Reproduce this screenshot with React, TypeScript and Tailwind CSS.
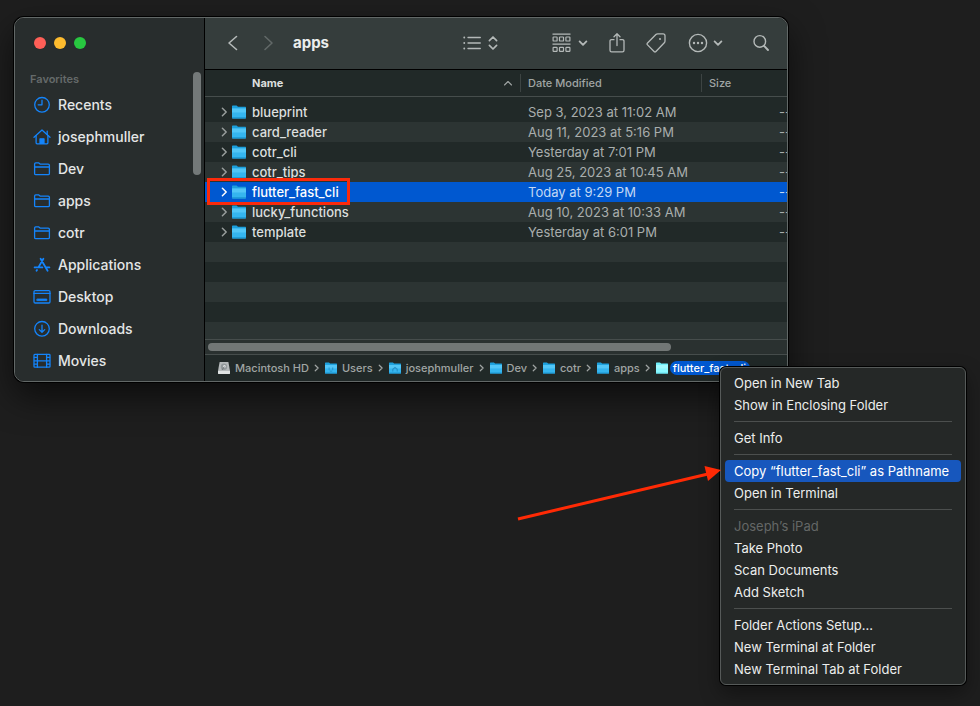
import type { ReactNode } from "react";

type FolderTone = "normal" | "bright";

function Folder({ small, tone = "normal", mark }: { small?: boolean; tone?: FolderTone; mark?: "users" | "home" }) {
  const bright = tone === "bright";
  return (
    <svg
      className={small ? "h-[12px] w-[12px] shrink-0" : "h-[14px] w-[14px] shrink-0"}
      viewBox="0 0 14 14"
      preserveAspectRatio="none"
      aria-hidden="true"
    >
      <path d="M0 1.3Q0 .6.7.6H4.6L6 1.8H13.4Q14 1.8 14 2.4V6H0Z" fill={bright ? "#6ff0fb" : "#1c9fdc"} />
      <path d="M0 3.4H14V12.7Q14 13.4 13.3 13.4H.7Q0 13.4 0 12.7Z" fill={bright ? "#8bf8ff" : "#35b5ef"} />
      <path d="M0 3.4H14V7.5H0Z" fill={bright ? "#a2fbff" : "#52c6f7"} />
      <path d="M0 12.2H14V12.7Q14 13.4 13.3 13.4H.7Q0 13.4 0 12.7Z" fill={bright ? "#62dff0" : "#1a95d2"} />
      {mark === "users" && (
        <path d="M4.8 6.4V9.2M9 6.4V9.2M5.4 10.4Q7 11.4 8.6 10.4" stroke="#2590c8" strokeWidth="1.1" fill="none" />
      )}
      {mark === "home" && <path d="M4.4 11V8.4L7 6.4L9.6 8.4V11" stroke="#2590c8" strokeWidth="1.3" fill="none" />}
    </svg>
  );
}

function Disk() {
  return (
    <svg className="h-[12px] w-[12px] shrink-0" viewBox="0 0 12 12" aria-hidden="true">
      <path d="M1.6 0H10.4L12 9V11.2Q12 12 11.2 12H.8Q0 12 0 11.2V9Z" fill="#b5babb" />
      <path d="M0 9H12V11.2Q12 12 11.2 12H.8Q0 12 0 11.2Z" fill="#dfe3e3" />
      <circle cx="6" cy="4.8" r="3.2" fill="#92999b" />
      <circle cx="6.4" cy="4.4" r="1.3" fill="#dde1e2" />
      <path d="M4 8L6.4 4.6" stroke="#666d6f" strokeWidth=".8" />
    </svg>
  );
}

function Chevron({ className, d, box = "0 0 10 10", width = 1.5 }: { className: string; d: string; box?: string; width?: number }) {
  return (
    <svg className={className} viewBox={box} fill="none" stroke="currentColor" strokeWidth={width} strokeLinecap="round" strokeLinejoin="round" aria-hidden="true">
      <path d={d} />
    </svg>
  );
}

function SideGlyph({ children }: { children: ReactNode }) {
  return (
    <svg className="h-[18px] w-[18px] shrink-0 text-[#1484fa]" viewBox="0 0 18 18" fill="none" stroke="currentColor" strokeWidth="1.3" strokeLinecap="round" strokeLinejoin="round" aria-hidden="true">
      {children}
    </svg>
  );
}

const folderGlyph = (
  <SideGlyph>
    <path d="M1.6 13.4V4Q1.6 2.9 2.7 2.9H5.8L7.4 4.2H15.2Q16.4 4.2 16.4 5.3V13.4Q16.4 14.6 15.2 14.6H2.8Q1.6 14.6 1.6 13.4Z" />
    <path d="M1.6 7H16.4" />
  </SideGlyph>
);

const favorites: { name: string; glyph: ReactNode }[] = [
  {
    name: "Recents",
    glyph: (
      <SideGlyph>
        <circle cx="9" cy="8.8" r="7.3" />
        <path d="M9 4.2V8.8H5.2" />
      </SideGlyph>
    ),
  },
  {
    name: "josephmuller",
    glyph: (
      <SideGlyph>
        <path d="M1 9.2L9 2L17 9.2" />
        <path d="M3.1 7.6V14.8Q3.1 15.8 4.1 15.8H13.9Q14.9 15.8 14.9 14.8V7.6M14.2 6.4V3.2" />
        <path d="M7 15.4V10.8H11V15.4Z" fill="currentColor" />
      </SideGlyph>
    ),
  },
  { name: "Dev", glyph: folderGlyph },
  { name: "apps", glyph: folderGlyph },
  { name: "cotr", glyph: folderGlyph },
  {
    name: "Applications",
    glyph: (
      <SideGlyph>
        <g strokeWidth="1.8">
          <path d="M7.6 2.8L14.6 14.8M10.4 2.8L5.4 11.4M1.6 11.4H9.4M12.6 11.4H16.4M4 14L3.5 14.8" />
        </g>
      </SideGlyph>
    ),
  },
  {
    name: "Desktop",
    glyph: (
      <SideGlyph>
        <rect x="1" y="2.6" width="16" height="12.4" rx="1.2" />
        <path d="M1 5.4H17" />
        <rect x="4.2" y="11" width="9.6" height="1.6" fill="currentColor" strokeWidth=".8" />
      </SideGlyph>
    ),
  },
  {
    name: "Downloads",
    glyph: (
      <SideGlyph>
        <circle cx="9" cy="8.8" r="7.3" />
        <path d="M9 5.2V12M6.3 9.6L9 12.2L11.7 9.6" />
      </SideGlyph>
    ),
  },
  {
    name: "Movies",
    glyph: (
      <SideGlyph>
        <rect x="1" y="2.4" width="16" height="12.8" rx=".8" />
        <path d="M4.4 2.4V15.2M13.6 2.4V15.2M4.4 8.8H13.6M1.4 5.4H4M1.4 8.8H4M1.4 12.2H4M14 5.4H16.6M14 8.8H16.6M14 12.2H16.6" />
      </SideGlyph>
    ),
  },
];

const rows = [
  { name: "blueprint", date: "Sep 3, 2023 at 11:02 AM" },
  { name: "card_reader", date: "Aug 11, 2023 at 5:16 PM" },
  { name: "cotr_cli", date: "Yesterday at 7:01 PM" },
  { name: "cotr_tips", date: "Aug 25, 2023 at 10:45 AM" },
  { name: "flutter_fast_cli", date: "Today at 9:29 PM", selected: true },
  { name: "lucky_functions", date: "Aug 10, 2023 at 10:33 AM" },
  { name: "template", date: "Yesterday at 6:01 PM" },
];

const path: { name: string; icon: ReactNode }[] = [
  { name: "Macintosh HD", icon: <Disk /> },
  { name: "Users", icon: <Folder small mark="users" /> },
  { name: "josephmuller", icon: <Folder small mark="home" /> },
  { name: "Dev", icon: <Folder small /> },
  { name: "cotr", icon: <Folder small /> },
  { name: "apps", icon: <Folder small /> },
];

const menu: { label: string; active?: boolean; heading?: boolean }[][] = [
  [{ label: "Open in New Tab" }, { label: "Show in Enclosing Folder" }],
  [{ label: "Get Info" }],
  [{ label: "Copy “flutter_fast_cli” as Pathname", active: true }, { label: "Open in Terminal" }],
  [
    { label: "Joseph’s iPad", heading: true },
    { label: "Take Photo" },
    { label: "Scan Documents" },
    { label: "Add Sketch" },
  ],
  [{ label: "Folder Actions Setup..." }, { label: "New Terminal at Folder" }, { label: "New Terminal Tab at Folder" }],
];

function Sidebar() {
  return (
    <aside className="flex w-[190px] shrink-0 border-r border-black bg-[#282d2d]">
      <div className="min-w-0 flex-1 pl-[15px]">
        <div className="flex gap-2 pt-[19px] pl-[4px]">
          <button type="button" aria-label="Close" className="h-3 w-3 rounded-full bg-[#ff5f57]" />
          <button type="button" aria-label="Minimize" className="h-3 w-3 rounded-full bg-[#febc2e]" />
          <button type="button" aria-label="Zoom" className="h-3 w-3 rounded-full bg-[#28c840]" />
        </div>
        <h2 className="mt-[22px] text-[11px] leading-[16px] font-semibold text-[#656a6a]">Favorites</h2>
        <nav className="mt-[2px]">
          {favorites.map((f) => (
            <a key={f.name} href="#" className="flex h-8 items-center gap-[7px] pl-[3px] text-[14px] leading-[20px] font-medium text-[#e4e6e6]">
              {f.glyph}
              {f.name}
            </a>
          ))}
        </nav>
      </div>
      <div className="mt-[54px] mr-[3px] h-[103px] w-2 rounded-full bg-[#747979]" />
    </aside>
  );
}

function Toolbar() {
  return (
    <header className="flex h-[52px] items-center border-b border-black bg-[#353d3c] pr-[18px] pb-px pl-[22px] text-[#b4b9b8]">
      <button type="button" aria-label="Back">
        <Chevron className="h-4 w-3" d="M9.5 1.5L2 8L9.5 14.5" box="0 0 12 16" width={1.6} />
      </button>
      <button type="button" aria-label="Forward" className="ml-6 text-[#616867]">
        <Chevron className="h-4 w-3" d="M2 1.5L9 8L2 14.5" box="0 0 12 16" width={1.6} />
      </button>
      <h1 className="ml-[18px] text-[15px] leading-[22px] font-bold text-[#eceeed]">apps</h1>
      <button type="button" aria-label="View as list" className="ml-auto flex items-center gap-[7px]">
        <svg className="h-[14px] w-[18px]" viewBox="0 0 18 14" stroke="currentColor" strokeWidth="1.3" strokeLinecap="round" aria-hidden="true">
          <path d="M5 1.5H17.3M5 7H17.3M5 12.5H17.3" />
          <path d="M1.2 1.5H1.3M1.2 7H1.3M1.2 12.5H1.3" strokeWidth="1.8" />
        </svg>
        <Chevron className="h-[16px] w-[10px]" d="M1.4 5.6L5 2L8.6 5.6M1.4 10.4L5 14L8.6 10.4" box="0 0 10 16" width={1.7} />
      </button>
      <button type="button" aria-label="Group items" className="ml-[54px] flex items-center gap-[7px]">
        <svg className="h-5 w-[19px]" viewBox="0 0 19 20" fill="none" stroke="currentColor" strokeWidth="1.2" aria-hidden="true">
          <path d="M.5 1.1H18.5M.5 11.1H18.5" />
          {[1.1, 7.5, 13.9].map((x) => (
            <g key={x}>
              <rect x={x} y="4" width="4" height="4" rx=".6" />
              <rect x={x} y="14.4" width="4" height="4" rx=".6" />
            </g>
          ))}
        </svg>
        <Chevron className="h-[10px] w-[10px]" d="M1.6 3.4L5 6.8L8.4 3.4" width={1.8} />
      </button>
      <button type="button" aria-label="Share" className="ml-[21px]">
        <svg className="h-5 w-4" viewBox="0 0 16 20" fill="none" stroke="currentColor" strokeWidth="1.3" strokeLinecap="round" strokeLinejoin="round" aria-hidden="true">
          <path d="M5 6.7H2.6Q1 6.7 1 8.2V17.2Q1 18.8 2.6 18.8H13.4Q15 18.8 15 17.2V8.2Q15 6.7 13.4 6.7H11" />
          <path d="M8 12.6V1M5 3.7L8 .8L11 3.7" />
        </svg>
      </button>
      <button type="button" aria-label="Edit tags" className="ml-[21px]">
        <svg className="h-5 w-5" viewBox="0 0 20 20" fill="none" stroke="currentColor" strokeWidth="1.3" strokeLinejoin="round" aria-hidden="true">
          <path d="M1.3 11.6Q.7 11 1.3 10.3L9.9 1.5Q10.6.8 11.6.8H17Q19 .8 19 2.8V8Q19 9 18.3 9.7L9.7 18.7Q9 19.3 8.3 18.7Z" />
          <circle cx="14" cy="5.9" r="1" fill="currentColor" stroke="none" />
        </svg>
      </button>
      <button type="button" aria-label="More actions" className="ml-[22px] flex items-center gap-[5px]">
        <svg className="h-5 w-5" viewBox="0 0 20 20" fill="none" stroke="currentColor" strokeWidth="1.4" aria-hidden="true">
          <circle cx="10" cy="10" r="8.6" />
          <g fill="currentColor" stroke="none">
            <circle cx="6" cy="10" r="1.2" />
            <circle cx="10" cy="10" r="1.2" />
            <circle cx="14" cy="10" r="1.2" />
          </g>
        </svg>
        <Chevron className="h-[10px] w-[10px]" d="M1.6 3.4L5 6.8L8.4 3.4" width={1.8} />
      </button>
      <button type="button" aria-label="Search" className="ml-[30px]">
        <svg className="h-[18px] w-4" viewBox="0 0 16 18" fill="none" stroke="currentColor" strokeLinecap="round" aria-hidden="true">
          <circle cx="6.8" cy="7.4" r="5.8" strokeWidth="1.4" />
          <path d="M11.1 11.9L15 16" strokeWidth="1.9" />
        </svg>
      </button>
    </header>
  );
}

function FileTable() {
  return (
    <div className="overflow-hidden bg-[#212928]">
      <table className="w-[calc(100%+4px)] table-fixed border-collapse text-left text-[13px] leading-[20px] whitespace-nowrap">
        <colgroup>
          <col />
          <col className="w-[181px]" />
          <col className="w-[90px]" />
        </colgroup>
        <thead>
          <tr className="h-[26px] border-b border-[#464d4c] text-[11px] leading-[18px] text-[#a0a5a4]">
            <th className="p-0 font-bold text-[#dcdfde]">
              <span className="flex items-center justify-between pr-[7px] pl-[47px]">
                Name
                <Chevron className="h-[10px] w-[10px] text-[#a0a5a4]" d="M1.5 7L5 3.5L8.5 7" width={1.1} />
              </span>
            </th>
            <th className="p-0 font-medium">
              <span className="block border-l border-[#3d4443] pl-[7px]">Date Modified</span>
            </th>
            <th className="p-0 font-medium">
              <span className="block border-l border-[#3d4443] pl-[7px]">Size</span>
            </th>
          </tr>
        </thead>
        <tbody>
          <tr aria-hidden="true" className="h-[6px]">
            <td colSpan={3} className="p-0" />
          </tr>
          {rows.map((r) => (
            <tr
              key={r.name}
              className={
                r.selected
                  ? "h-5 bg-[#0058d0] text-[#c3d8f5]"
                  : "h-5 text-[#a9aead] odd:bg-[#2c3433]"
              }
            >
              <td className="p-0">
                <button type="button" className="relative flex h-5 w-full items-center pl-[14px] font-medium">
                  <Chevron
                    className={r.selected ? "h-[10px] w-[10px] text-white" : "h-[10px] w-[10px] text-[#989d9c]"}
                    d="M3.4 1.3L7.2 5L3.4 8.7"
                  />
                  <span className="mr-[6px] ml-[3px] flex">
                    <Folder />
                  </span>
                  <span className={r.selected ? "text-white" : "text-[#dcdfde]"}>{r.name}</span>
                  {r.selected && (
                    <span className="absolute -top-1 -bottom-[3px] left-[2px] w-[143px] border-3 border-[#fb2a0b]" />
                  )}
                </button>
              </td>
              <td className="py-0 pr-0 pl-2">{r.date}</td>
              <td className="p-0 text-right">--</td>
            </tr>
          ))}
          {["h-5", "h-5", "h-5", "h-5", "h-[17px]"].map((h, i) => (
            <tr key={i} aria-hidden="true" className={i % 2 ? h : `${h} bg-[#2c3433]`}>
              <td colSpan={3} className="p-0" />
            </tr>
          ))}
        </tbody>
      </table>
    </div>
  );
}

function PathBar() {
  return (
    <nav aria-label="Path" className="flex h-[26px] items-center overflow-hidden bg-[#212928] pl-[13px] text-[11px] leading-[14px] font-medium whitespace-nowrap text-[#a0a5a4]">
      {path.map((p) => (
        <a key={p.name} href="#" className="flex items-center">
          {p.icon}
          <span className="ml-[5px]">{p.name}</span>
          <Chevron className="mx-1 h-2 w-2" d="M2.8 1.5L6.4 5L2.8 8.5" />
        </a>
      ))}
      <a href="#" className="flex items-center text-white">
        <Folder small tone="bright" />
        <span className="ml-[2px] rounded-full bg-[#0058d0] pr-1 pl-[3px]">flutter_fast_cli</span>
      </a>
    </nav>
  );
}

function ContextMenu() {
  return (
    <div className="absolute top-[350px] -right-[178px] w-[246px] rounded-md border border-[#565a59] bg-[#252827] p-1 shadow-[0_0_0_1px_#000,0_8px_20px_rgba(0,0,0,0.4)]">
      <div role="menu" className="text-[13px] leading-[22px] text-[#eceeed]">
        {menu.map((group, g) => (
          <div
            key={g}
            role="group"
            className={g ? "before:mx-[9px] before:my-[5px] before:block before:h-px before:bg-[#4c4f4e]" : ""}
          >
            {group.map((m) =>
              m.heading ? (
                <div key={m.label} className="px-[9px] text-[#646766]">
                  {m.label}
                </div>
              ) : (
                <button
                  key={m.label}
                  type="button"
                  role="menuitem"
                  className={
                    m.active
                      ? "block w-full rounded-sm bg-[#1757bd] px-[9px] text-left whitespace-nowrap text-white"
                      : "block w-full px-[9px] text-left whitespace-nowrap"
                  }
                >
                  {m.label}
                </button>
              ),
            )}
          </div>
        ))}
      </div>
      <svg className="absolute top-[92px] right-[243px] h-[64px] w-[208px]" viewBox="0 0 208 64" aria-hidden="true">
        <path d="M4 59L194 14" stroke="#ff2a05" strokeWidth="3" />
        <path d="M207 10L190.500 6L194 21Z" fill="#ff2a05" />
      </svg>
    </div>
  );
}

export default function App() {
  return (
    <div className="min-h-screen overflow-hidden bg-[#1e1e1e] pt-[17px] pr-[192px] pb-[325px] pl-[14px] font-['Inter','Noto_Sans',sans-serif]">
      <div className="relative">
        <main className="flex overflow-hidden rounded-[10px] border border-[#626867] shadow-[0_0_0_1px_#000,0_14px_34px_rgba(0,0,0,0.6)]">
          <Sidebar />
          <div className="min-w-0 flex-1">
            <Toolbar />
            <FileTable />
            <div className="border-y border-[#464d4c] bg-[#2a3130] py-[3px] pl-[3px]">
              <div className="h-2 w-4/5 rounded-full bg-[#727776]" />
            </div>
            <PathBar />
          </div>
        </main>
        <ContextMenu />
      </div>
    </div>
  );
}
